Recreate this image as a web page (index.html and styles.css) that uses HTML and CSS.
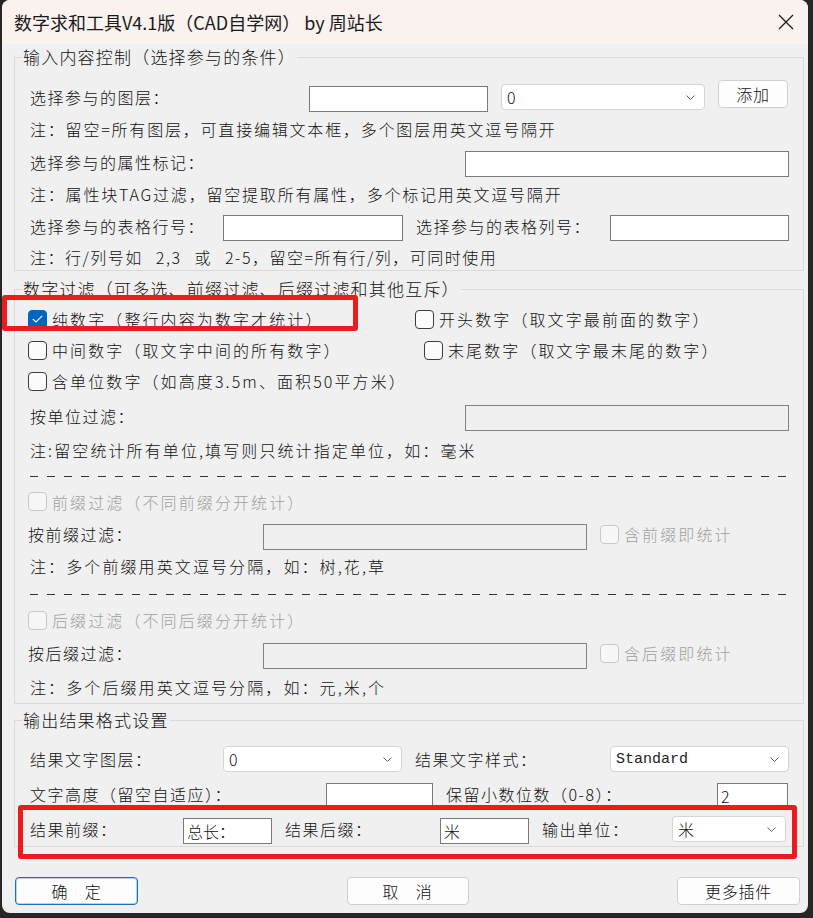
FILE: index.html
```html
<!DOCTYPE html>
<html>
<head>
    <meta charset="utf-8">
    <title>数字求和工具V4.1版</title>
    <link rel="stylesheet" href="styles.css">
</head>
<body>
    <div class="window">
        <div class="titlebar">
            <span class="title">数字求和工具V4.1版（CAD自学网） by 周站长</span>
            <svg class="close" width="16" height="16" viewBox="0 0 16 16"><path d="M1 1L15 15M15 1L1 15" stroke="#1a1a1a" stroke-width="1.3" fill="none"/></svg>
        </div>

        <div class="content">
            <fieldset class="group group-input">
                <legend>输入内容控制（选择参与的条件）</legend>
                <div class="row h32">
                    <span class="lbl w266">选择参与的图层：</span>
                    <input class="box w179" type="text">
                    <div class="combo w204"><span>0</span><svg width="9" height="5" viewBox="0 0 9 5"><path d="M0.5 0.5L4.5 4.5L8.5 0.5" stroke="#606060" fill="none"/></svg></div>
                    <button class="btn btn-add" type="button">添加</button>
                </div>
                <div class="row h32 note">注：留空=所有图层，可直接编辑文本框，多个图层用英文逗号隔开</div>
                <div class="row h34">
                    <span class="lbl w422">选择参与的属性标记：</span>
                    <input class="box w324" type="text">
                </div>
                <div class="row h29 note">注：属性块TAG过滤，留空提取所有属性，多个标记用英文逗号隔开</div>
                <div class="row h36">
                    <span class="lbl w180">选择参与的表格行号：</span>
                    <input class="box w180" type="text">
                    <span class="lbl w181">选择参与的表格列号：</span>
                    <input class="box w179" type="text">
                </div>
                <div class="row h26 note spaced">注：行/列号如 2,3 或 2-5，留空=所有行/列，可同时使用</div>
            </fieldset>

            <fieldset class="group group-filter">
                <legend>数字过滤（可多选、前缀过滤、后缀过滤和其他互斥）</legend>
                <div class="row cbrow h32">
                    <label class="check w374"><span class="cb on"><svg width="11" height="8" viewBox="0 0 11 8"><path d="M0.8 4L4 7L10.2 0.8" stroke="#fff" stroke-width="1.1" fill="none"/></svg></span>纯数字（整行内容为数字才统计）</label>
                    <label class="check"><span class="cb"></span>开头数字（取文字最前面的数字）</label>
                </div>
                <div class="row cbrow h30">
                    <label class="check w383"><span class="cb"></span>中间数字（取文字中间的所有数字）</label>
                    <label class="check"><span class="cb"></span>末尾数字（取文字最末尾的数字）</label>
                </div>
                <div class="row cbrow h32">
                    <label class="check"><span class="cb"></span>含单位数字（如高度3.5m、面积50平方米）</label>
                </div>
                <div class="row h38">
                    <span class="lbl w422">按单位过滤：</span>
                    <input class="box off w324" type="text" disabled>
                </div>
                <div class="row h29 note wide">注:留空统计所有单位,填写则只统计指定单位，如：毫米</div>
                <div class="row h22"><div class="dashes"></div></div>
                <div class="row cbrow h31">
                    <label class="check dim"><span class="cb"></span>前缀过滤（不同前缀分开统计）</label>
                </div>
                <div class="row cbrow h34">
                    <span class="lbl w222">按前缀过滤：</span>
                    <input class="box off low w324" type="text" disabled>
                    <label class="check dim"><span class="cb"></span>含前缀即统计</label>
                </div>
                <div class="row h30 note wide">注：多个前缀用英文逗号分隔，如：树,花,草</div>
                <div class="row h24"><div class="dashes"></div></div>
                <div class="row cbrow h30">
                    <label class="check dim"><span class="cb"></span>后缀过滤（不同后缀分开统计）</label>
                </div>
                <div class="row cbrow h36">
                    <span class="lbl w222">按后缀过滤：</span>
                    <input class="box off low w324" type="text" disabled>
                    <label class="check dim"><span class="cb"></span>含后缀即统计</label>
                </div>
                <div class="row h32 note wide">注：多个后缀用英文逗号分隔，如：元,米,个</div>
            </fieldset>

            <fieldset class="group group-output">
                <legend>输出结果格式设置</legend>
                <div class="row h34">
                    <span class="lbl w180">结果文字图层：</span>
                    <div class="combo w179"><span>0</span><svg width="9" height="5" viewBox="0 0 9 5"><path d="M0.5 0.5L4.5 4.5L8.5 0.5" stroke="#606060" fill="none"/></svg></div>
                    <span class="lbl w182">结果文字样式：</span>
                    <div class="combo w179"><span class="mono">Standard</span><svg width="9" height="5" viewBox="0 0 9 5"><path d="M0.5 0.5L4.5 4.5L8.5 0.5" stroke="#606060" fill="none"/></svg></div>
                </div>
                <div class="row h36">
                    <span class="lbl w283">文字高度（留空自适应）：</span>
                    <input class="box w107" type="text">
                    <span class="lbl w258">保留小数位数（0-8）：</span>
                    <input class="box w71" type="text" value="2">
                </div>
                <div class="row h34">
                    <span class="lbl w140">结果前缀：</span>
                    <input class="box w89" type="text" value="总长：">
                    <span class="lbl w142">结果后缀：</span>
                    <input class="box w89" type="text" value="米">
                    <span class="lbl w117">输出单位：</span>
                    <div class="combo w114"><span>米</span><svg width="9" height="5" viewBox="0 0 9 5"><path d="M0.5 0.5L4.5 4.5L8.5 0.5" stroke="#606060" fill="none"/></svg></div>
                </div>
            </fieldset>
        </div>

        <div class="footer">
            <button class="btn btn-ok" type="button">确　定</button>
            <button class="btn btn-cancel" type="button">取　消</button>
            <button class="btn btn-more" type="button">更多插件</button>
        </div>

        <div class="mark mark-pure"></div>
        <div class="mark mark-output"></div>
    </div>
</body>
</html>
```

FILE: styles.css
```css
html, body {
    margin: 0;
}
body {
    background: #262626;
    font-family: "Noto Sans CJK SC", sans-serif;
    font-size: 16px;
    font-weight: 300;
    color: #111;
}
.window {
    position: relative;
    width: 806px;
    height: 913px;
    margin-left: 2px;
    background: #f0f0f0;
    border-radius: 8px;
    overflow: hidden;
}
.titlebar {
    height: 44px;
    background: #f9f2ee;
    display: flex;
    align-items: center;
    justify-content: space-between;
    padding: 0 14px 0 12px;
}
.title {
    font-size: 18px;
    font-weight: 400;
    color: #1a1a1a;
}
.content {
    padding: 1px 4px 0 12px;
}
.group {
    margin: 0;
    border: 1px solid #d9d9d9;
    padding: 0 0 0 7px;
    min-width: 0;
}
.group legend {
    padding: 0 1px;
    font-size: 17px;
    line-height: 24px;
    letter-spacing: 1.2px;
}
.group-input {
    padding-top: 12px;
}
.group-filter {
    margin-top: 6px;
    padding-top: 2px;
}
.group-output {
    margin-top: 4px;
    padding-top: 10px;
}
.row {
    display: flex;
    align-items: center;
    gap: 13px;
    padding-left: 8px;
    white-space: nowrap;
}
.cbrow {
    padding-left: 6px;
}
.h22 { height: 22px; }
.h24 { height: 24px; }
.h26 { height: 26px; }
.h29 { height: 29px; }
.h30 { height: 30px; }
.h31 { height: 31px; }
.h32 { height: 32px; }
.h34 { height: 34px; }
.h36 { height: 36px; }
.h38 { height: 38px; }

.lbl {
    flex: none;
    letter-spacing: 1.5px;
}
.note {
    letter-spacing: 1.8px;
}
.note.spaced {
    letter-spacing: 1.5px;
    word-spacing: 8px;
}
.note.wide {
    letter-spacing: 2.1px;
}
.w71 { width: 71px; }
.w89 { width: 89px; }
.w107 { width: 107px; }
.w114 { width: 114px; }
.w117 { width: 117px; }
.w140 { width: 140px; }
.w142 { width: 142px; }
.w179 { width: 179px; }
.w180 { width: 180px; }
.w181 { width: 181px; }
.w182 { width: 182px; }
.w204 { width: 204px; }
.w222 { width: 222px; }
.w258 { width: 258px; }
.w266 { width: 266px; }
.w283 { width: 283px; }
.w324 { width: 324px; }
.w374 { width: 374px; }
.w383 { width: 383px; }
.w422 { width: 422px; }

.box {
    flex: none;
    box-sizing: border-box;
    height: 26px;
    margin: 4px 0 0 0;
    padding: 0 3px;
    border: 1px solid #7a7a7a;
    border-radius: 0;
    background: #fff;
    font: inherit;
    color: #111;
    outline: none;
}
.box.off {
    background: #f0f0f0;
    border-color: #838383;
}
.box.low {
    margin-top: 6px;
}
.combo {
    flex: none;
    box-sizing: border-box;
    height: 26px;
    display: flex;
    align-items: center;
    justify-content: space-between;
    padding: 0 9px 0 5px;
    border: 1px solid #d5d5d5;
    border-radius: 4px;
    background: #fff;
}
.mono {
    font-family: "Liberation Mono", monospace;
    font-size: 15px;
    font-weight: 400;
    color: #222;
}
.check {
    flex: none;
    display: flex;
    align-items: center;
    letter-spacing: 2.1px;
}
.check.dim {
    color: #a0a0a0;
}
.cb {
    box-sizing: border-box;
    width: 19px;
    height: 19px;
    margin-right: 5px;
    border: 1px solid #3c3c3c;
    border-radius: 4px;
    background: #fbfbfb;
    display: flex;
    align-items: center;
    justify-content: center;
}
.cb.on {
    background: #0067c0;
    border-color: #0067c0;
}
.dim .cb {
    border-color: #c8c8c8;
    background: #f6f6f6;
}
.dashes {
    flex: 1;
    height: 1px;
    margin: 3px 13px 0 0;
    background: repeating-linear-gradient(to right, #333 0 8px, transparent 8px 17px);
}
.btn {
    box-sizing: border-box;
    height: 28px;
    border: 1px solid #d0d0d0;
    border-radius: 4px;
    background: #fdfdfd;
    font: inherit;
    font-size: 16px;
    letter-spacing: 0.7px;
    color: #111;
    padding: 0;
}
.btn-add {
    width: 70px;
    margin-top: -6px;
}
.footer {
    display: flex;
    justify-content: space-between;
    padding: 30px 8px 0 13px;
}
.btn-ok, .btn-more {
    width: 123px;
}
.btn-cancel {
    width: 122px;
}
.btn-ok {
    border-color: #1c6ec2;
    box-shadow: inset 0 0 0 1px rgba(28, 110, 194, 0.3);
}
.mark {
    position: absolute;
    box-sizing: border-box;
    border: 5px solid #ec1c1c;
    border-radius: 3px;
}
.mark-pure {
    left: 0;
    top: 295px;
    width: 356px;
    height: 36px;
}
.mark-output {
    left: 16px;
    top: 805px;
    width: 779px;
    height: 54px;
}
```
